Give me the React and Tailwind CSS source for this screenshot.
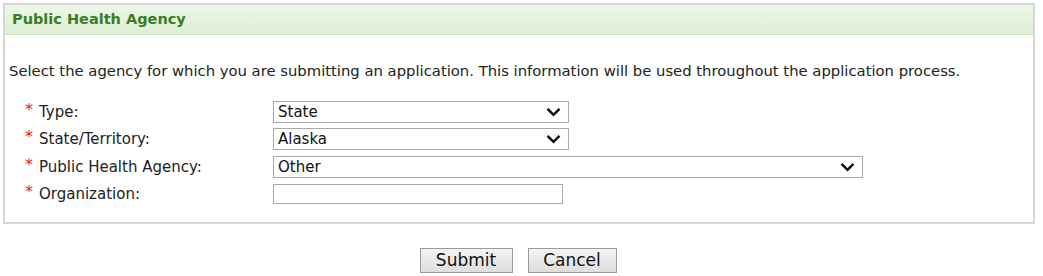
import React from "react";

const font = { fontFamily: '"DejaVu Sans", Verdana, sans-serif' };

function Chevron() {
  return (
    <svg width="15" height="10" viewBox="0 0 15 10" className="absolute right-[7px] top-1/2 -translate-y-1/2">
      <path d="M1.5 1.8 L7.5 7.8 L13.5 1.8" fill="none" stroke="#111" strokeWidth="2.5" />
    </svg>
  );
}

function Select({ value, width }) {
  return (
    <div className={`relative h-[22px] border border-[#a9a9a9] bg-white ${width}`}>
      <div className="pl-[4px] leading-[20px] text-[15px] text-[#111]">{value}</div>
      <Chevron />
    </div>
  );
}

function Row({ label, children }) {
  return (
    <div className="flex items-center h-[27.5px]">
      <div className="w-[268px] flex items-center pl-[20px]">
        <span className="text-[#e0242b] text-[16px] w-[14px] leading-none -mt-[4px]">*</span>
        <span className="text-[15px] text-[#222]">{label}</span>
      </div>
      {children}
    </div>
  );
}

export default function App() {
  return (
    <div style={font} className="bg-white w-[1043px] h-[276px] pt-[3px] pl-[3px]">
      <div className="w-[1032px] h-[221px] border-2 border-[#d6d6d6]">
        <div className="h-[30px] bg-gradient-to-b from-[#eef7ea] to-[#dcefd2] border-b border-[#cde5bf] flex items-center pl-[7px]">
          <span className="text-[14.5px] font-bold text-[#3b7d21]">Public Health Agency</span>
        </div>
        <div className="pl-[4px] pt-[27px] text-[14.8px] text-[#222] leading-[18px]">
          Select the agency for which you are submitting an application. This information will be used throughout the application process.
        </div>
        <div className="mt-[18px]">
          <Row label="Type:">
            <Select value="State" width="w-[296px]" />
          </Row>
          <Row label="State/Territory:">
            <Select value="Alaska" width="w-[296px]" />
          </Row>
          <Row label="Public Health Agency:">
            <Select value="Other" width="w-[590px]" />
          </Row>
          <Row label="Organization:">
            <div className="h-[20px] w-[290px] border border-[#a9a9a9] bg-white" />
          </Row>
        </div>
      </div>
      <div className="flex justify-center gap-[15px] mt-[24px] pr-[10px]">
        <button className="h-[25px] w-[93px] border border-[#9a9a9a] bg-gradient-to-b from-[#f4f4f4] to-[#dedede] text-[17px] text-[#111] leading-none">Submit</button>
        <button className="h-[25px] w-[89px] border border-[#9a9a9a] bg-gradient-to-b from-[#f4f4f4] to-[#dedede] text-[17px] text-[#111] leading-none">Cancel</button>
      </div>
    </div>
  );
}
